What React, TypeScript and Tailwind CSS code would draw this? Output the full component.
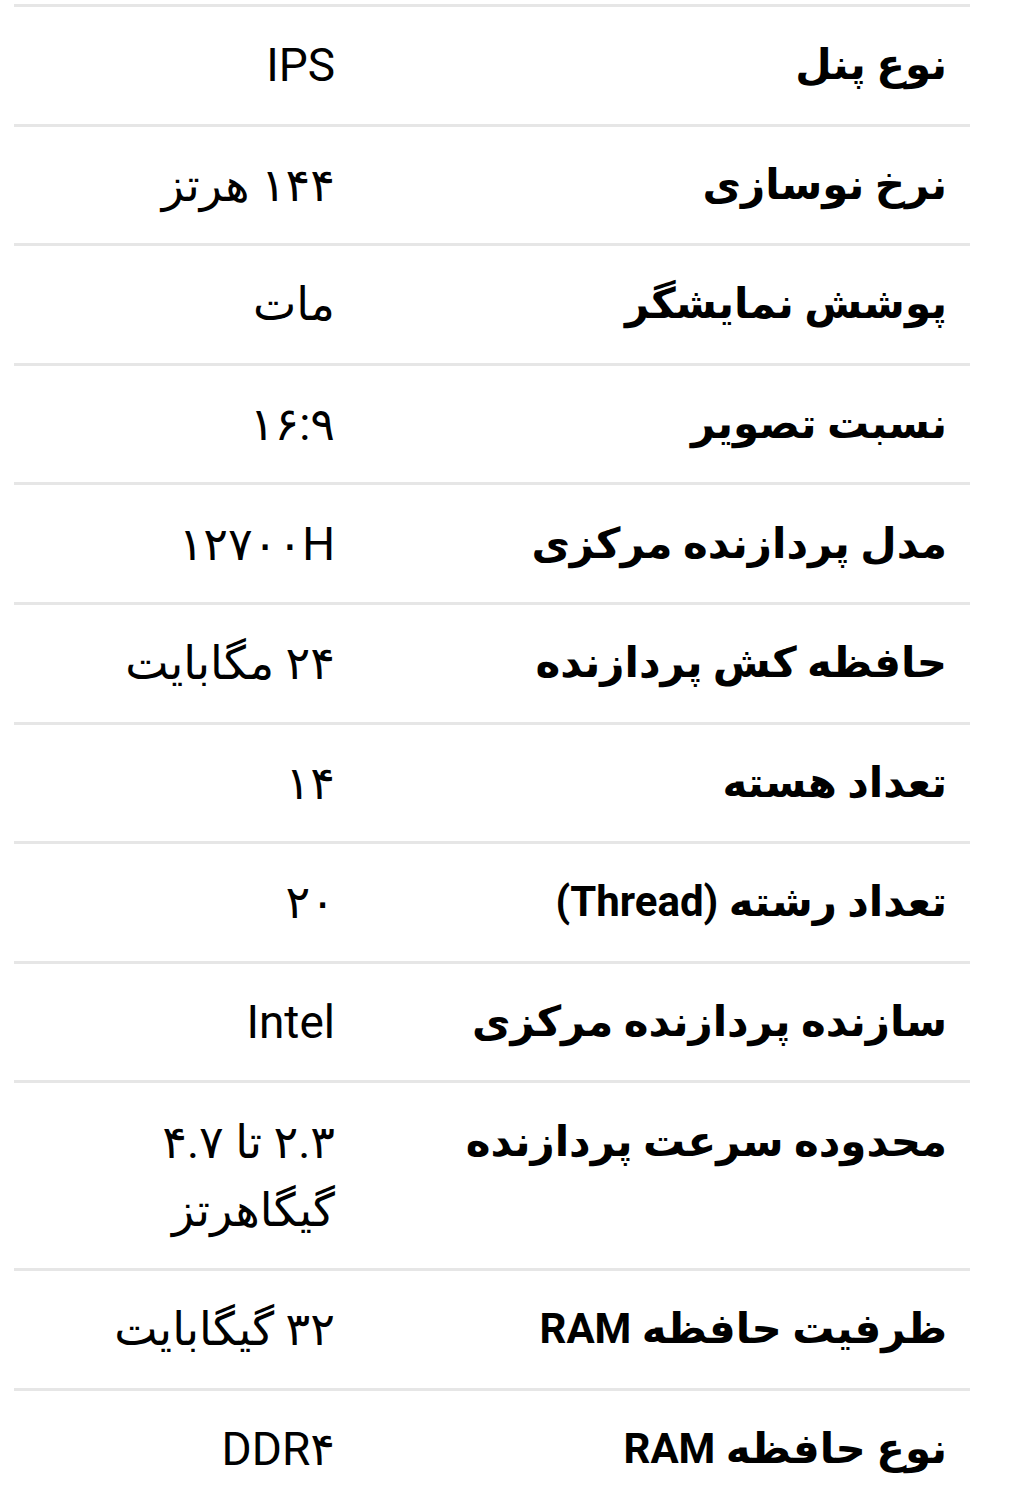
const specs: { label: string; value: string }[] = [
  { label: "نوع پنل", value: "IPS" },
  { label: "نرخ نوسازی", value: "۱۴۴ هرتز" },
  { label: "پوشش نمایشگر", value: "مات" },
  { label: "نسبت تصویر", value: "۱۶:۹" },
  { label: "مدل پردازنده مرکزی", value: "۱۲۷۰۰H" },
  { label: "حافظه کش پردازنده", value: "۲۴ مگابایت" },
  { label: "تعداد هسته", value: "۱۴" },
  { label: "تعداد رشته (Thread)", value: "۲۰" },
  { label: "سازنده پردازنده مرکزی", value: "Intel" },
  { label: "محدوده سرعت پردازنده", value: "۲.۳ تا ۴.۷ گیگاهرتز" },
  { label: "ظرفیت حافظه RAM", value: "۳۲ گیگابایت" },
  { label: "نوع حافظه RAM", value: "DDR۴" },
]

export default function App() {
  return (
    <div
      dir="rtl"
      className="min-h-[1500px] bg-white pt-[4px] text-black"
      style={{ fontFamily: 'Roboto, "DejaVu Sans", sans-serif' }}
    >
      <div className="ml-[14px] mr-[47px]">
        {specs.map((spec, index) => (
          <div key={index} className="flex border-t-[3px] border-[#e6e6e6] py-[24.3px]">
            <div className="w-[635px] shrink-0 pr-[23px] text-[42px] font-bold leading-[68px]">
              {spec.label}
            </div>
            <div className="flex-1">
              <div className="max-w-[260px] text-[46px] leading-[68px]">{spec.value}</div>
            </div>
          </div>
        ))}
      </div>
    </div>
  )
}
